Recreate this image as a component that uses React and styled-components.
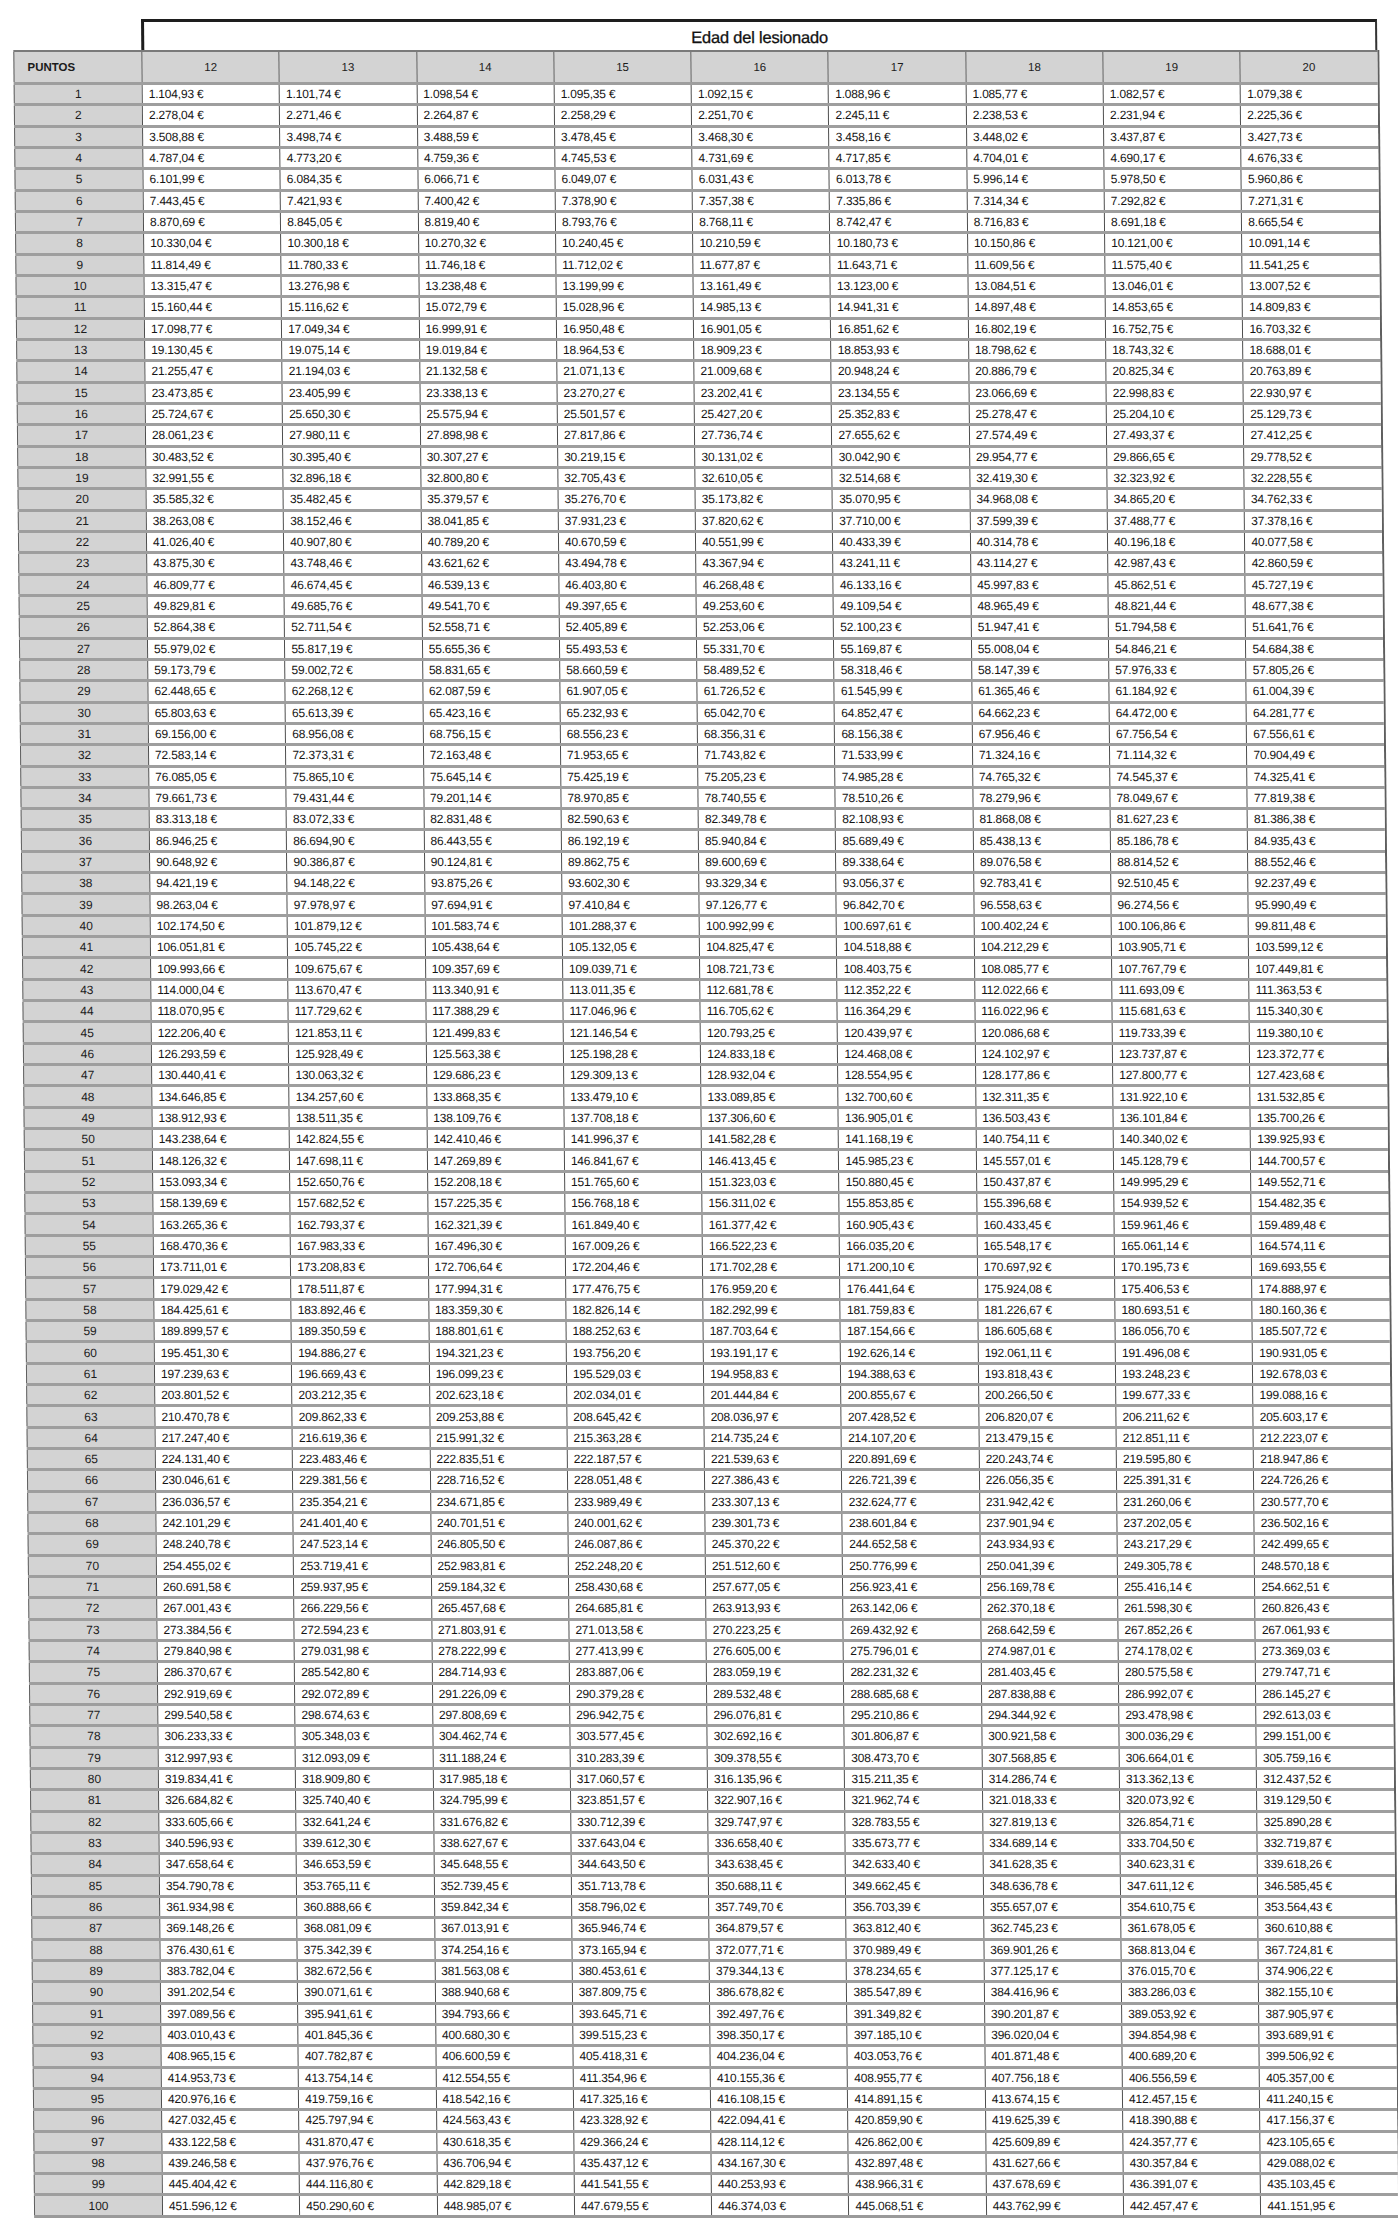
import React from "react";
import styled, { createGlobalStyle } from "styled-components";

const AGES = [12, 13, 14, 15, 16, 17, 18, 19, 20];

// una fila por punto, de 12 a 20 años
const ROWS = [
  "1.104,93 1.101,74 1.098,54 1.095,35 1.092,15 1.088,96 1.085,77 1.082,57 1.079,38",
  "2.278,04 2.271,46 2.264,87 2.258,29 2.251,70 2.245,11 2.238,53 2.231,94 2.225,36",
  "3.508,88 3.498,74 3.488,59 3.478,45 3.468,30 3.458,16 3.448,02 3.437,87 3.427,73",
  "4.787,04 4.773,20 4.759,36 4.745,53 4.731,69 4.717,85 4.704,01 4.690,17 4.676,33",
  "6.101,99 6.084,35 6.066,71 6.049,07 6.031,43 6.013,78 5.996,14 5.978,50 5.960,86",
  "7.443,45 7.421,93 7.400,42 7.378,90 7.357,38 7.335,86 7.314,34 7.292,82 7.271,31",
  "8.870,69 8.845,05 8.819,40 8.793,76 8.768,11 8.742,47 8.716,83 8.691,18 8.665,54",
  "10.330,04 10.300,18 10.270,32 10.240,45 10.210,59 10.180,73 10.150,86 10.121,00 10.091,14",
  "11.814,49 11.780,33 11.746,18 11.712,02 11.677,87 11.643,71 11.609,56 11.575,40 11.541,25",
  "13.315,47 13.276,98 13.238,48 13.199,99 13.161,49 13.123,00 13.084,51 13.046,01 13.007,52",
  "15.160,44 15.116,62 15.072,79 15.028,96 14.985,13 14.941,31 14.897,48 14.853,65 14.809,83",
  "17.098,77 17.049,34 16.999,91 16.950,48 16.901,05 16.851,62 16.802,19 16.752,75 16.703,32",
  "19.130,45 19.075,14 19.019,84 18.964,53 18.909,23 18.853,93 18.798,62 18.743,32 18.688,01",
  "21.255,47 21.194,03 21.132,58 21.071,13 21.009,68 20.948,24 20.886,79 20.825,34 20.763,89",
  "23.473,85 23.405,99 23.338,13 23.270,27 23.202,41 23.134,55 23.066,69 22.998,83 22.930,97",
  "25.724,67 25.650,30 25.575,94 25.501,57 25.427,20 25.352,83 25.278,47 25.204,10 25.129,73",
  "28.061,23 27.980,11 27.898,98 27.817,86 27.736,74 27.655,62 27.574,49 27.493,37 27.412,25",
  "30.483,52 30.395,40 30.307,27 30.219,15 30.131,02 30.042,90 29.954,77 29.866,65 29.778,52",
  "32.991,55 32.896,18 32.800,80 32.705,43 32.610,05 32.514,68 32.419,30 32.323,92 32.228,55",
  "35.585,32 35.482,45 35.379,57 35.276,70 35.173,82 35.070,95 34.968,08 34.865,20 34.762,33",
  "38.263,08 38.152,46 38.041,85 37.931,23 37.820,62 37.710,00 37.599,39 37.488,77 37.378,16",
  "41.026,40 40.907,80 40.789,20 40.670,59 40.551,99 40.433,39 40.314,78 40.196,18 40.077,58",
  "43.875,30 43.748,46 43.621,62 43.494,78 43.367,94 43.241,11 43.114,27 42.987,43 42.860,59",
  "46.809,77 46.674,45 46.539,13 46.403,80 46.268,48 46.133,16 45.997,83 45.862,51 45.727,19",
  "49.829,81 49.685,76 49.541,70 49.397,65 49.253,60 49.109,54 48.965,49 48.821,44 48.677,38",
  "52.864,38 52.711,54 52.558,71 52.405,89 52.253,06 52.100,23 51.947,41 51.794,58 51.641,76",
  "55.979,02 55.817,19 55.655,36 55.493,53 55.331,70 55.169,87 55.008,04 54.846,21 54.684,38",
  "59.173,79 59.002,72 58.831,65 58.660,59 58.489,52 58.318,46 58.147,39 57.976,33 57.805,26",
  "62.448,65 62.268,12 62.087,59 61.907,05 61.726,52 61.545,99 61.365,46 61.184,92 61.004,39",
  "65.803,63 65.613,39 65.423,16 65.232,93 65.042,70 64.852,47 64.662,23 64.472,00 64.281,77",
  "69.156,00 68.956,08 68.756,15 68.556,23 68.356,31 68.156,38 67.956,46 67.756,54 67.556,61",
  "72.583,14 72.373,31 72.163,48 71.953,65 71.743,82 71.533,99 71.324,16 71.114,32 70.904,49",
  "76.085,05 75.865,10 75.645,14 75.425,19 75.205,23 74.985,28 74.765,32 74.545,37 74.325,41",
  "79.661,73 79.431,44 79.201,14 78.970,85 78.740,55 78.510,26 78.279,96 78.049,67 77.819,38",
  "83.313,18 83.072,33 82.831,48 82.590,63 82.349,78 82.108,93 81.868,08 81.627,23 81.386,38",
  "86.946,25 86.694,90 86.443,55 86.192,19 85.940,84 85.689,49 85.438,13 85.186,78 84.935,43",
  "90.648,92 90.386,87 90.124,81 89.862,75 89.600,69 89.338,64 89.076,58 88.814,52 88.552,46",
  "94.421,19 94.148,22 93.875,26 93.602,30 93.329,34 93.056,37 92.783,41 92.510,45 92.237,49",
  "98.263,04 97.978,97 97.694,91 97.410,84 97.126,77 96.842,70 96.558,63 96.274,56 95.990,49",
  "102.174,50 101.879,12 101.583,74 101.288,37 100.992,99 100.697,61 100.402,24 100.106,86 99.811,48",
  "106.051,81 105.745,22 105.438,64 105.132,05 104.825,47 104.518,88 104.212,29 103.905,71 103.599,12",
  "109.993,66 109.675,67 109.357,69 109.039,71 108.721,73 108.403,75 108.085,77 107.767,79 107.449,81",
  "114.000,04 113.670,47 113.340,91 113.011,35 112.681,78 112.352,22 112.022,66 111.693,09 111.363,53",
  "118.070,95 117.729,62 117.388,29 117.046,96 116.705,62 116.364,29 116.022,96 115.681,63 115.340,30",
  "122.206,40 121.853,11 121.499,83 121.146,54 120.793,25 120.439,97 120.086,68 119.733,39 119.380,10",
  "126.293,59 125.928,49 125.563,38 125.198,28 124.833,18 124.468,08 124.102,97 123.737,87 123.372,77",
  "130.440,41 130.063,32 129.686,23 129.309,13 128.932,04 128.554,95 128.177,86 127.800,77 127.423,68",
  "134.646,85 134.257,60 133.868,35 133.479,10 133.089,85 132.700,60 132.311,35 131.922,10 131.532,85",
  "138.912,93 138.511,35 138.109,76 137.708,18 137.306,60 136.905,01 136.503,43 136.101,84 135.700,26",
  "143.238,64 142.824,55 142.410,46 141.996,37 141.582,28 141.168,19 140.754,11 140.340,02 139.925,93",
  "148.126,32 147.698,11 147.269,89 146.841,67 146.413,45 145.985,23 145.557,01 145.128,79 144.700,57",
  "153.093,34 152.650,76 152.208,18 151.765,60 151.323,03 150.880,45 150.437,87 149.995,29 149.552,71",
  "158.139,69 157.682,52 157.225,35 156.768,18 156.311,02 155.853,85 155.396,68 154.939,52 154.482,35",
  "163.265,36 162.793,37 162.321,39 161.849,40 161.377,42 160.905,43 160.433,45 159.961,46 159.489,48",
  "168.470,36 167.983,33 167.496,30 167.009,26 166.522,23 166.035,20 165.548,17 165.061,14 164.574,11",
  "173.711,01 173.208,83 172.706,64 172.204,46 171.702,28 171.200,10 170.697,92 170.195,73 169.693,55",
  "179.029,42 178.511,87 177.994,31 177.476,75 176.959,20 176.441,64 175.924,08 175.406,53 174.888,97",
  "184.425,61 183.892,46 183.359,30 182.826,14 182.292,99 181.759,83 181.226,67 180.693,51 180.160,36",
  "189.899,57 189.350,59 188.801,61 188.252,63 187.703,64 187.154,66 186.605,68 186.056,70 185.507,72",
  "195.451,30 194.886,27 194.321,23 193.756,20 193.191,17 192.626,14 192.061,11 191.496,08 190.931,05",
  "197.239,63 196.669,43 196.099,23 195.529,03 194.958,83 194.388,63 193.818,43 193.248,23 192.678,03",
  "203.801,52 203.212,35 202.623,18 202.034,01 201.444,84 200.855,67 200.266,50 199.677,33 199.088,16",
  "210.470,78 209.862,33 209.253,88 208.645,42 208.036,97 207.428,52 206.820,07 206.211,62 205.603,17",
  "217.247,40 216.619,36 215.991,32 215.363,28 214.735,24 214.107,20 213.479,15 212.851,11 212.223,07",
  "224.131,40 223.483,46 222.835,51 222.187,57 221.539,63 220.891,69 220.243,74 219.595,80 218.947,86",
  "230.046,61 229.381,56 228.716,52 228.051,48 227.386,43 226.721,39 226.056,35 225.391,31 224.726,26",
  "236.036,57 235.354,21 234.671,85 233.989,49 233.307,13 232.624,77 231.942,42 231.260,06 230.577,70",
  "242.101,29 241.401,40 240.701,51 240.001,62 239.301,73 238.601,84 237.901,94 237.202,05 236.502,16",
  "248.240,78 247.523,14 246.805,50 246.087,86 245.370,22 244.652,58 243.934,93 243.217,29 242.499,65",
  "254.455,02 253.719,41 252.983,81 252.248,20 251.512,60 250.776,99 250.041,39 249.305,78 248.570,18",
  "260.691,58 259.937,95 259.184,32 258.430,68 257.677,05 256.923,41 256.169,78 255.416,14 254.662,51",
  "267.001,43 266.229,56 265.457,68 264.685,81 263.913,93 263.142,06 262.370,18 261.598,30 260.826,43",
  "273.384,56 272.594,23 271.803,91 271.013,58 270.223,25 269.432,92 268.642,59 267.852,26 267.061,93",
  "279.840,98 279.031,98 278.222,99 277.413,99 276.605,00 275.796,01 274.987,01 274.178,02 273.369,03",
  "286.370,67 285.542,80 284.714,93 283.887,06 283.059,19 282.231,32 281.403,45 280.575,58 279.747,71",
  "292.919,69 292.072,89 291.226,09 290.379,28 289.532,48 288.685,68 287.838,88 286.992,07 286.145,27",
  "299.540,58 298.674,63 297.808,69 296.942,75 296.076,81 295.210,86 294.344,92 293.478,98 292.613,03",
  "306.233,33 305.348,03 304.462,74 303.577,45 302.692,16 301.806,87 300.921,58 300.036,29 299.151,00",
  "312.997,93 312.093,09 311.188,24 310.283,39 309.378,55 308.473,70 307.568,85 306.664,01 305.759,16",
  "319.834,41 318.909,80 317.985,18 317.060,57 316.135,96 315.211,35 314.286,74 313.362,13 312.437,52",
  "326.684,82 325.740,40 324.795,99 323.851,57 322.907,16 321.962,74 321.018,33 320.073,92 319.129,50",
  "333.605,66 332.641,24 331.676,82 330.712,39 329.747,97 328.783,55 327.819,13 326.854,71 325.890,28",
  "340.596,93 339.612,30 338.627,67 337.643,04 336.658,40 335.673,77 334.689,14 333.704,50 332.719,87",
  "347.658,64 346.653,59 345.648,55 344.643,50 343.638,45 342.633,40 341.628,35 340.623,31 339.618,26",
  "354.790,78 353.765,11 352.739,45 351.713,78 350.688,11 349.662,45 348.636,78 347.611,12 346.585,45",
  "361.934,98 360.888,66 359.842,34 358.796,02 357.749,70 356.703,39 355.657,07 354.610,75 353.564,43",
  "369.148,26 368.081,09 367.013,91 365.946,74 364.879,57 363.812,40 362.745,23 361.678,05 360.610,88",
  "376.430,61 375.342,39 374.254,16 373.165,94 372.077,71 370.989,49 369.901,26 368.813,04 367.724,81",
  "383.782,04 382.672,56 381.563,08 380.453,61 379.344,13 378.234,65 377.125,17 376.015,70 374.906,22",
  "391.202,54 390.071,61 388.940,68 387.809,75 386.678,82 385.547,89 384.416,96 383.286,03 382.155,10",
  "397.089,56 395.941,61 394.793,66 393.645,71 392.497,76 391.349,82 390.201,87 389.053,92 387.905,97",
  "403.010,43 401.845,36 400.680,30 399.515,23 398.350,17 397.185,10 396.020,04 394.854,98 393.689,91",
  "408.965,15 407.782,87 406.600,59 405.418,31 404.236,04 403.053,76 401.871,48 400.689,20 399.506,92",
  "414.953,73 413.754,14 412.554,55 411.354,96 410.155,36 408.955,77 407.756,18 406.556,59 405.357,00",
  "420.976,16 419.759,16 418.542,16 417.325,16 416.108,15 414.891,15 413.674,15 412.457,15 411.240,15",
  "427.032,45 425.797,94 424.563,43 423.328,92 422.094,41 420.859,90 419.625,39 418.390,88 417.156,37",
  "433.122,58 431.870,47 430.618,35 429.366,24 428.114,12 426.862,00 425.609,89 424.357,77 423.105,65",
  "439.246,58 437.976,76 436.706,94 435.437,12 434.167,30 432.897,48 431.627,66 430.357,84 429.088,02",
  "445.404,42 444.116,80 442.829,18 441.541,55 440.253,93 438.966,31 437.678,69 436.391,07 435.103,45",
  "451.596,12 450.290,60 448.985,07 447.679,55 446.374,03 445.068,51 443.762,99 442.457,47 441.151,95",
];

const COLS = "128px repeat(9, 137.3px)";

const GlobalStyle = createGlobalStyle`
  body {
    margin: 0;
    background: #ffffff;
    font-family: "Liberation Sans", Arial, sans-serif;
    color: #111;
  }
`;

const Page = styled.div`
  width: 1398px;
  height: 2236px;
  overflow: hidden;
  padding: 19px 0 0 13px;
  box-sizing: border-box;
`;

// el escaneo está ligeramente inclinado
const Sheet = styled.div`
  width: max-content;
  transform: skewX(0.55deg);
  transform-origin: 0 0;
`;

const TitleRow = styled.div`
  display: grid;
  grid-template-columns: ${COLS};
`;

const TitleBox = styled.div`
  grid-column: 2 / span 9;
  height: 31px;
  box-sizing: border-box;
  border: 2px solid #333;
  border-top: 3px solid #1e1e1e;
  border-left: 3px solid #1e1e1e;
  border-bottom: none;
  display: flex;
  align-items: center;
  justify-content: center;
  padding-top: 2px;
  font-size: 16.5px;
  font-weight: 400;
  letter-spacing: -0.2px;
  color: #111;
  -webkit-text-stroke: 0.3px #111;
`;

const Grid = styled.div`
  border-right: 2px solid #5f5f5f;
  border-bottom: 3px solid #9a9a9a;
`;

const HeadRow = styled.div`
  display: grid;
  grid-template-columns: ${COLS};
  height: 30px;
  border-top: 2px solid #7a7a7a;
`;

const HeadCell = styled.div`
  background: #d3d3d3;
  border-left: 1px solid #5f5f5f;
  display: flex;
  align-items: center;
  justify-content: ${(p) => (p.$left ? "flex-start" : "center")};
  padding-left: ${(p) => (p.$left ? "13px" : "0")};
  font-size: 11.5px;
  font-weight: ${(p) => (p.$left ? 700 : 400)};
  color: #1c1c1c;
`;

const Row = styled.div`
  display: grid;
  grid-template-columns: ${COLS};
  height: 21.33px;
  box-sizing: border-box;
  border-top: 3px solid #9e9e9e;
`;

const PointCell = styled.div`
  background: #d3d3d3;
  border-left: 1px solid #5f5f5f;
  display: flex;
  align-items: center;
  justify-content: center;
  font-size: 12px;
  color: #1c1c1c;
`;

const ValueCell = styled.div`
  background: #ffffff;
  border-left: 1px solid #4f4f4f;
  display: flex;
  align-items: center;
  padding-left: 6px;
  font-size: 12px;
  letter-spacing: -0.2px;
  color: #151515;
  white-space: nowrap;
`;

export default function App() {
  return (
    <>
      <GlobalStyle />
      <Page>
        <Sheet>
          <TitleRow>
            <TitleBox>Edad del lesionado</TitleBox>
          </TitleRow>
          <Grid>
            <HeadRow>
              <HeadCell $left>PUNTOS</HeadCell>
              {AGES.map((a) => (
                <HeadCell key={a}>{a}</HeadCell>
              ))}
            </HeadRow>
            {ROWS.map((line, i) => (
              <Row key={i}>
                <PointCell>{i + 1}</PointCell>
                {line.split(" ").map((v, j) => (
                  <ValueCell key={j}>{v} €</ValueCell>
                ))}
              </Row>
            ))}
          </Grid>
        </Sheet>
      </Page>
    </>
  );
}
